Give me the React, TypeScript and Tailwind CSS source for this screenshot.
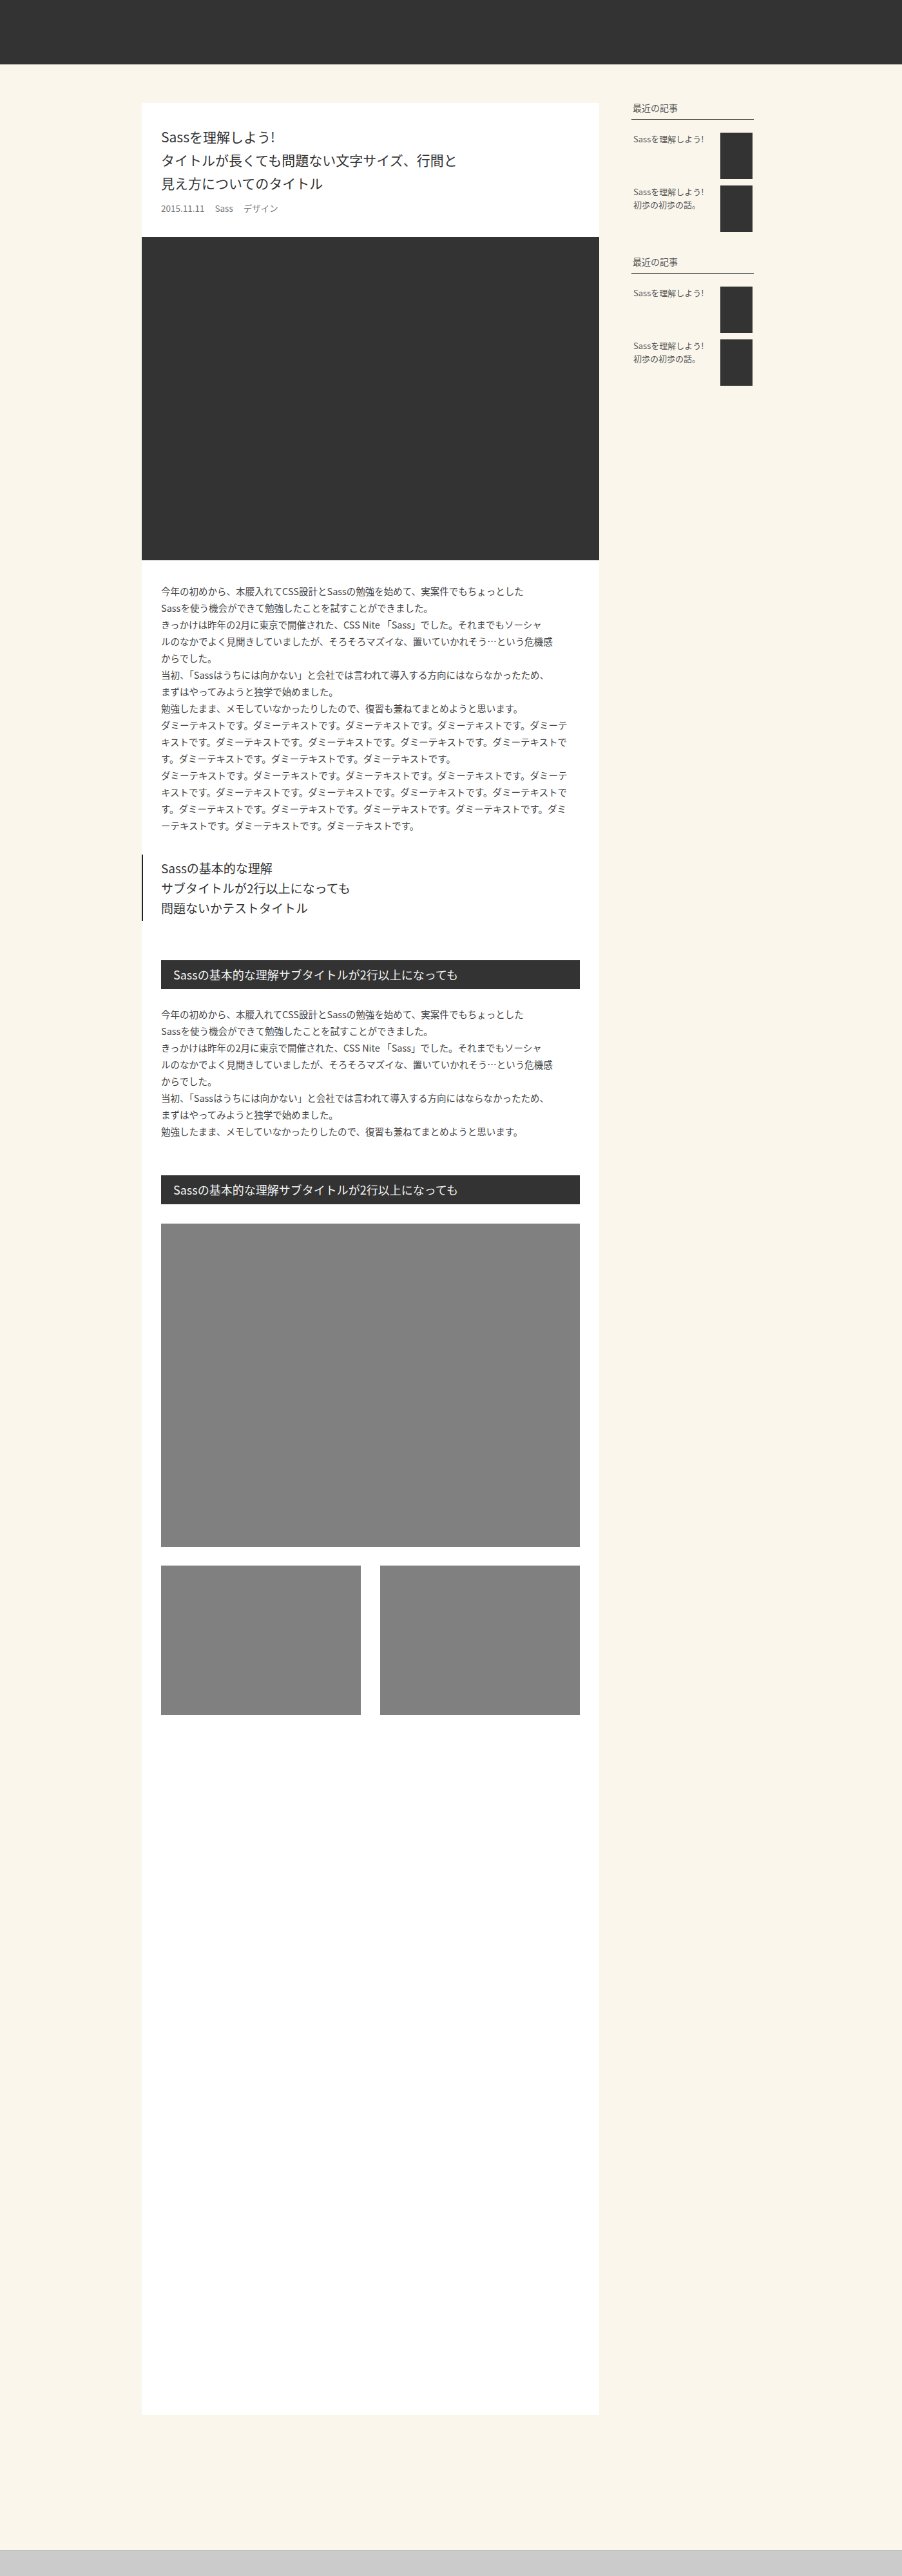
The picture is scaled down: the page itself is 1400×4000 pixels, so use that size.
import React from "react";

const dummy = "ダミーテキストです。";

function SideSection() {
  return (
    <div className="mb-[36px]">
      <h3 className="text-[14px] leading-[20px] text-[#555] pl-[2px] pb-[8px] border-b border-[#555]">最近の記事</h3>
      <ul className="mt-[20px] flex flex-col gap-[10px]">
        <li className="flex justify-between">
          <p className="text-[13px] leading-[20px] text-[#555] pl-[3px]">Sassを理解しよう!</p>
          <div className="w-[50px] h-[72px] bg-[#333] mr-[2px]" />
        </li>
        <li className="flex justify-between">
          <p className="text-[13px] leading-[20px] text-[#555] pl-[3px]">
            Sassを理解しよう!
            <br />
            初歩の初歩の話。
          </p>
          <div className="w-[50px] h-[72px] bg-[#333] mr-[2px]" />
        </li>
      </ul>
    </div>
  );
}

function Intro() {
  return (
    <>
      今年の初めから、本腰入れてCSS設計とSassの勉強を始めて、実案件でもちょっとした
      <br />
      Sassを使う機会ができて勉強したことを試すことができました。
      <br />
      きっかけは昨年の2月に東京で開催された、CSS Nite 「Sass」でした。それまでもソーシャ
      <br />
      ルのなかでよく見聞きしていましたが、そろそろマズイな、置いていかれそう…という危機感
      <br />
      からでした。
      <br />
      当初、「Sassはうちには向かない」と会社では言われて導入する方向にはならなかったため、
      <br />
      まずはやってみようと独学で始めました。
      <br />
      勉強したまま、メモしていなかったりしたので、復習も兼ねてまとめようと思います。
    </>
  );
}

export default function App() {
  return (
    <div className="min-h-[4000px] bg-[#faf6ec] font-['Noto_Sans_CJK_JP',sans-serif] text-[#444]">
      <header className="h-[100px] bg-[#333]" />
      <div className="w-[960px] mx-auto flex pt-[57px] pb-[210px]">
        <main className="w-[710px] h-[3590px] mt-[3px] bg-white">
          <div className="px-[30px] pt-[34px] pb-[33px]">
            <h1 className="text-[21px] leading-[36px] text-[#333]">
              Sassを理解しよう!
              <br />
              タイトルが長くても問題ない文字サイズ、行間と
              <br />
              見え方についてのタイトル
            </h1>
            <div className="mt-[9px] flex gap-[16px] text-[13.5px] leading-[24px] text-[#777]">
              <span>2015.11.11</span>
              <span>Sass</span>
              <span>デザイン</span>
            </div>
          </div>
          <div className="h-[502px] bg-[#333]" />
          <p className="mx-[30px] mt-[35px] text-[14.5px] leading-[26px] whitespace-nowrap">
            <Intro />
            <br />
            {dummy + dummy + dummy + dummy + "ダミーテ"}
            <br />
            {"キストです。" + dummy + dummy + dummy + "ダミーテキストで"}
            <br />
            {"す。" + dummy + dummy + dummy}
            <br />
            {dummy + dummy + dummy + dummy + "ダミーテ"}
            <br />
            {"キストです。" + dummy + dummy + dummy + "ダミーテキストで"}
            <br />
            {"す。" + dummy + dummy + dummy + dummy + "ダミ"}
            <br />
            {"ーテキストです。" + dummy + dummy}
          </p>
          <h2 className="mt-[32px] border-l-[2px] border-[#222] pl-[28px] py-[5px] text-[19px] leading-[31px] text-[#333]">
            Sassの基本的な理解
            <br />
            サブタイトルが2行以上になっても
            <br />
            問題ないかテストタイトル
          </h2>
          <h3 className="mx-[30px] mt-[61px] h-[45px] bg-[#333] px-[19px] flex items-center text-[18px] text-[#f2f2f2]">
            Sassの基本的な理解サブタイトルが2行以上になっても
          </h3>
          <p className="mx-[30px] mt-[26px] text-[14.5px] leading-[26px] whitespace-nowrap">
            <Intro />
          </p>
          <h3 className="mx-[30px] mt-[55px] h-[45px] bg-[#333] px-[19px] flex items-center text-[18px] text-[#f2f2f2]">
            Sassの基本的な理解サブタイトルが2行以上になっても
          </h3>
          <div className="mx-[30px] mt-[30px] h-[502px] bg-[#808080]" />
          <div className="mx-[30px] mt-[29px] grid grid-cols-2 gap-[30px]">
            <div className="h-[232px] bg-[#808080]" />
            <div className="h-[232px] bg-[#808080]" />
          </div>
        </main>
        <aside className="ml-[50px] w-[190px]">
          <SideSection />
          <SideSection />
        </aside>
      </div>
      <footer className="h-[40px] border-t border-[#bbb] bg-[#cbcbcb]" />
    </div>
  );
}
